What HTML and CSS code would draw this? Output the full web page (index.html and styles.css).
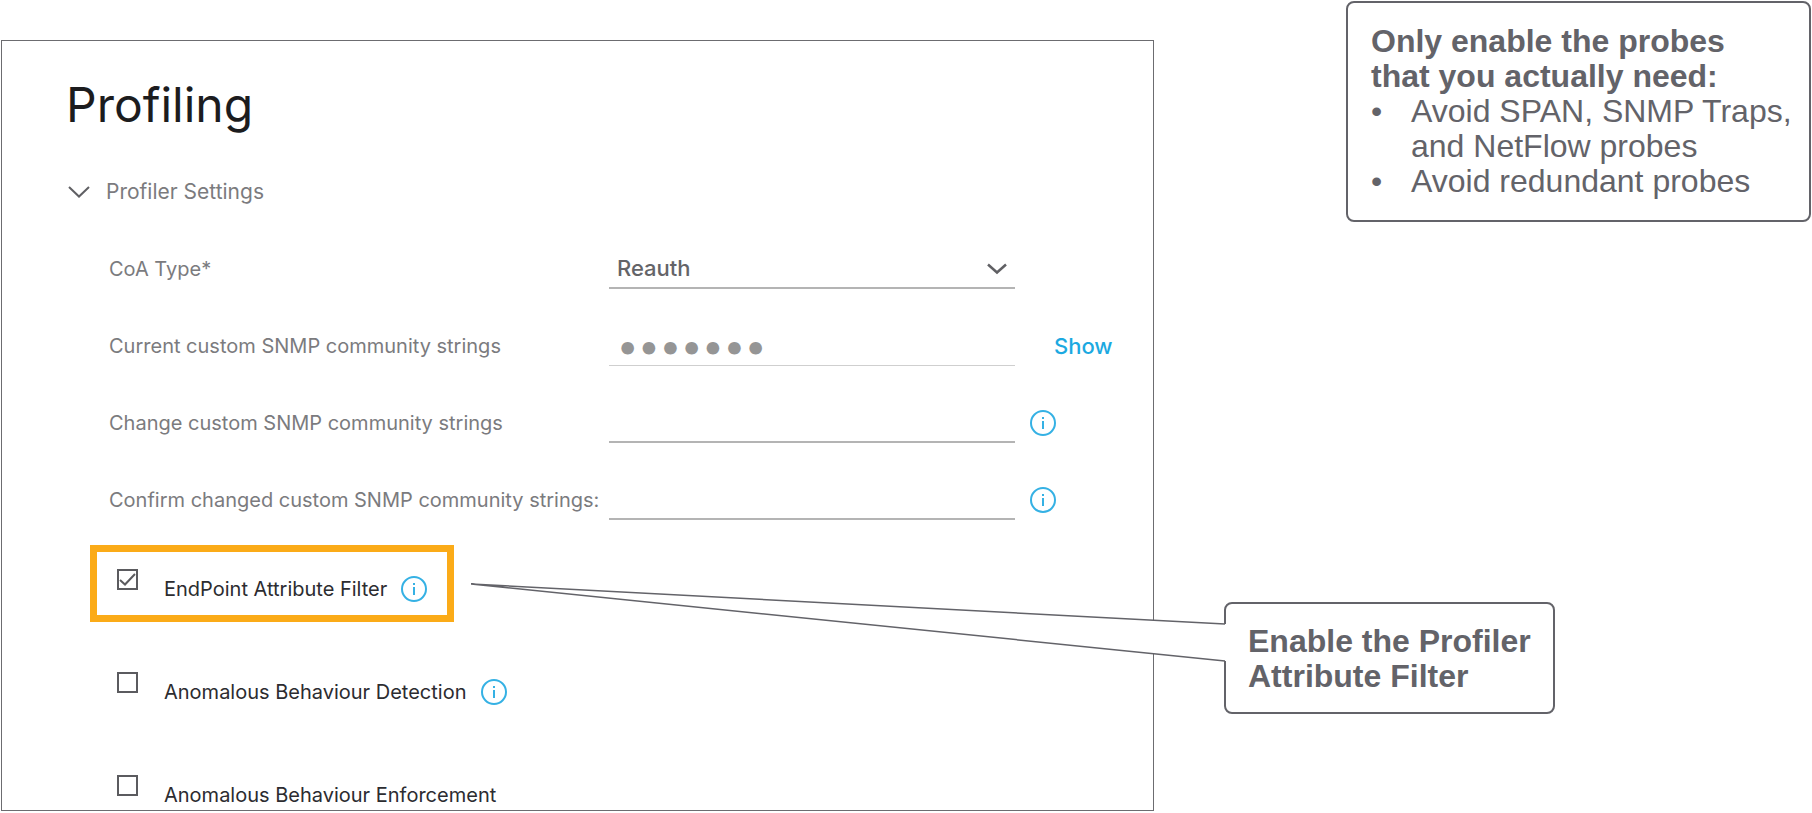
FILE: index.html
```html
<!DOCTYPE html>
<html lang="en">
<head>
<meta charset="utf-8">
<title>Profiling</title>
<link rel="stylesheet" href="styles.css">
</head>
<body>
<svg width="0" height="0" class="defs" aria-hidden="true">
  <symbol id="info" viewBox="0 0 26 26">
    <circle cx="13" cy="13" r="12" fill="none" stroke="currentColor" stroke-width="2"/>
    <path d="M13 7v2M13 11v8" fill="none" stroke="currentColor" stroke-width="2"/>
  </symbol>
  <symbol id="chevron" viewBox="0 0 22 12">
    <path d="M1 1l10 9.500L21 1" fill="none" stroke="currentColor" stroke-width="2"/>
  </symbol>
  <symbol id="chevron-small" viewBox="0 0 20 12">
    <path d="M1 1.500l9 8L19 1.500" fill="none" stroke="currentColor" stroke-width="2.500"/>
  </symbol>
</svg>
<main class="page">
  <section class="panel">
    <h1 class="title">Profiling</h1>
    <button type="button" class="section-toggle" aria-expanded="true">
      <svg class="chevron"><use href="#chevron"/></svg>
      <span>Profiler Settings</span>
    </button>
    <form class="settings">
      <div class="fields">
        <div class="field">
          <label for="coa">CoA Type*</label>
          <div class="select-wrap">
            <select id="coa" class="control"><option>Reauth</option></select>
            <svg class="select-chevron"><use href="#chevron-small"/></svg>
          </div>
        </div>
        <div class="field">
          <label for="current">Current custom SNMP community strings</label>
          <input id="current" class="control control-secret" type="password" value="1234567" readonly>
          <button type="button" class="show">Show</button>
        </div>
        <div class="field">
          <label for="change">Change custom SNMP community strings</label>
          <input id="change" class="control" type="text">
          <button type="button" class="info" aria-label="Help"><svg><use href="#info"/></svg></button>
        </div>
        <div class="field">
          <label for="confirm">Confirm changed custom SNMP community strings:</label>
          <input id="confirm" class="control" type="text">
          <button type="button" class="info" aria-label="Help"><svg><use href="#info"/></svg></button>
        </div>
      </div>
      <div class="options">
        <div class="option option-highlight">
          <input id="filter" class="tick" type="checkbox" checked>
          <div class="option-text">
            <label for="filter">EndPoint Attribute Filter</label>
            <button type="button" class="info" aria-label="Help"><svg><use href="#info"/></svg></button>
          </div>
        </div>
        <div class="option">
          <input id="detect" class="tick" type="checkbox">
          <div class="option-text">
            <label for="detect">Anomalous Behaviour Detection</label>
            <button type="button" class="info" aria-label="Help"><svg><use href="#info"/></svg></button>
          </div>
        </div>
        <div class="option">
          <input id="enforce" class="tick" type="checkbox">
          <div class="option-text">
            <label for="enforce">Anomalous Behaviour Enforcement</label>
          </div>
        </div>
      </div>
    </form>
  </section>
  <aside class="notes">
    <div class="note note-tips">
      <p class="note-title">Only enable the probes<br>that you actually need:</p>
      <ul class="tips">
        <li>Avoid SPAN, SNMP Traps, and NetFlow probes</li>
        <li>Avoid redundant probes</li>
      </ul>
    </div>
    <div class="note note-callout">
      <p class="note-title">Enable the Profiler<br>Attribute Filter</p>
      <svg class="pointer" viewBox="0 0 755 82" aria-hidden="true">
        <path d="M755 42H754L0 2L754 79H755Z" fill="#fff"/>
        <path d="M754 42L0 2L754 79" fill="none" stroke="#636369" stroke-width="1.500"/>
      </svg>
    </div>
  </aside>
</main>
</body>
</html>
```
FILE: styles.css
```css
* { box-sizing: border-box; }
body {
  margin: 0;
  background: #fff;
  font-family: Inter, "Liberation Sans", sans-serif;
  font-size: 20px;
  line-height: 26px;
  color: #7b7b7e;
}
button, input, select { font: inherit; color: inherit; margin: 0; }
button { padding: 0; border: 0; background: none; cursor: pointer; }
.defs { position: absolute; }

.page {
  display: grid;
  grid-template-columns: minmax(0, 1153fr) minmax(0, 657fr);
  padding: 1px 1px 0;
}

.panel {
  margin-top: 39px;
  padding: 36px 0 0 64px;
  border: 1px solid #6c6c70;
}
.title {
  margin: 0;
  font-size: 48px;
  line-height: 56px;
  font-weight: 400;
  color: #1c1c1e;
}
.section-toggle {
  display: flex;
  align-items: center;
  gap: 16px;
  margin: 46px 0 0 2px;
  font-size: 21px;
}
.chevron { width: 22px; height: 12px; color: #606064; }

.fields {
  display: grid;
  gap: 36px;
  margin: 43px 0 0 43px;
}
.field {
  display: grid;
  grid-template-columns: 500px 406px auto;
  justify-content: start;
  align-items: center;
}
.control {
  width: 100%;
  height: 41px;
  padding: 0 8px;
  border: 0;
  border-bottom: 2px solid #b4b4b4;
  border-radius: 0;
  background: none;
  outline: 0;
  appearance: none;
  font-size: 22px;
  font-weight: 500;
  color: #646468;
}
.control-secret {
  border-bottom: 1px solid #cfcfcf;
  font-size: 40px;
  color: #959595;
}
.select-wrap { position: relative; display: flex; }
.select-chevron {
  position: absolute;
  right: 8px;
  top: 15px;
  width: 20px;
  height: 12px;
  color: #606064;
}
.show {
  margin-left: 39px;
  font-size: 22px;
  font-weight: 500;
  color: #1ca9e1;
}
.info { width: 26px; height: 26px; color: #35b1e4; }
.info svg { display: block; width: 100%; height: 100%; }
.field .info { margin-left: 15px; }

.options {
  display: flex;
  flex-direction: column;
  align-items: flex-start;
  gap: 26px;
  margin: 25px 0 0 24px;
  color: #2c2c30;
}
.option {
  display: flex;
  align-items: flex-start;
  gap: 26px;
  padding: 17px 20px 13px;
  border: 7px solid transparent;
}
.option-highlight { border-color: #fbab18; }
.option:last-child { padding-bottom: 2px; border-bottom: 0; }
.option-text {
  display: flex;
  align-items: center;
  gap: 14px;
  margin-top: 7px;
}
.tick {
  appearance: none;
  width: 21px;
  height: 21px;
  border: 2px solid #5b5b5f;
  background: #fff;
}
.tick:checked {
  background:
    url("data:image/svg+xml,%3Csvg xmlns='http://www.w3.org/2000/svg' viewBox='0 0 17 17'%3E%3Cpath d='M1 9l5 4.500L16 3' fill='none' stroke='%235b5b5f' stroke-width='2'/%3E%3C/svg%3E")
    center / 17px 17px no-repeat;
}

.notes {
  display: flex;
  flex-direction: column;
  align-items: flex-start;
  gap: 380px;
  font-family: "Liberation Sans", Arial, sans-serif;
  font-size: 32px;
  line-height: 35px;
  color: #636369;
}
.note {
  position: relative;
  border: 2px solid #636369;
  border-radius: 8px;
}
.note-tips { align-self: flex-end; max-width: 465px; padding: 21px 12px 21px 23px; }
.note-callout { margin-left: 70px; padding: 20px 22px 18px; }
.note-title { margin: 0; font-weight: 700; }
.tips { margin: 0; padding: 0 0 0 40px; list-style: none; }
.tips li::before { content: "•"; float: left; margin-left: -40px; }
.pointer { position: absolute; right: 100%; top: -22px; width: 755px; height: 82px; }
```
